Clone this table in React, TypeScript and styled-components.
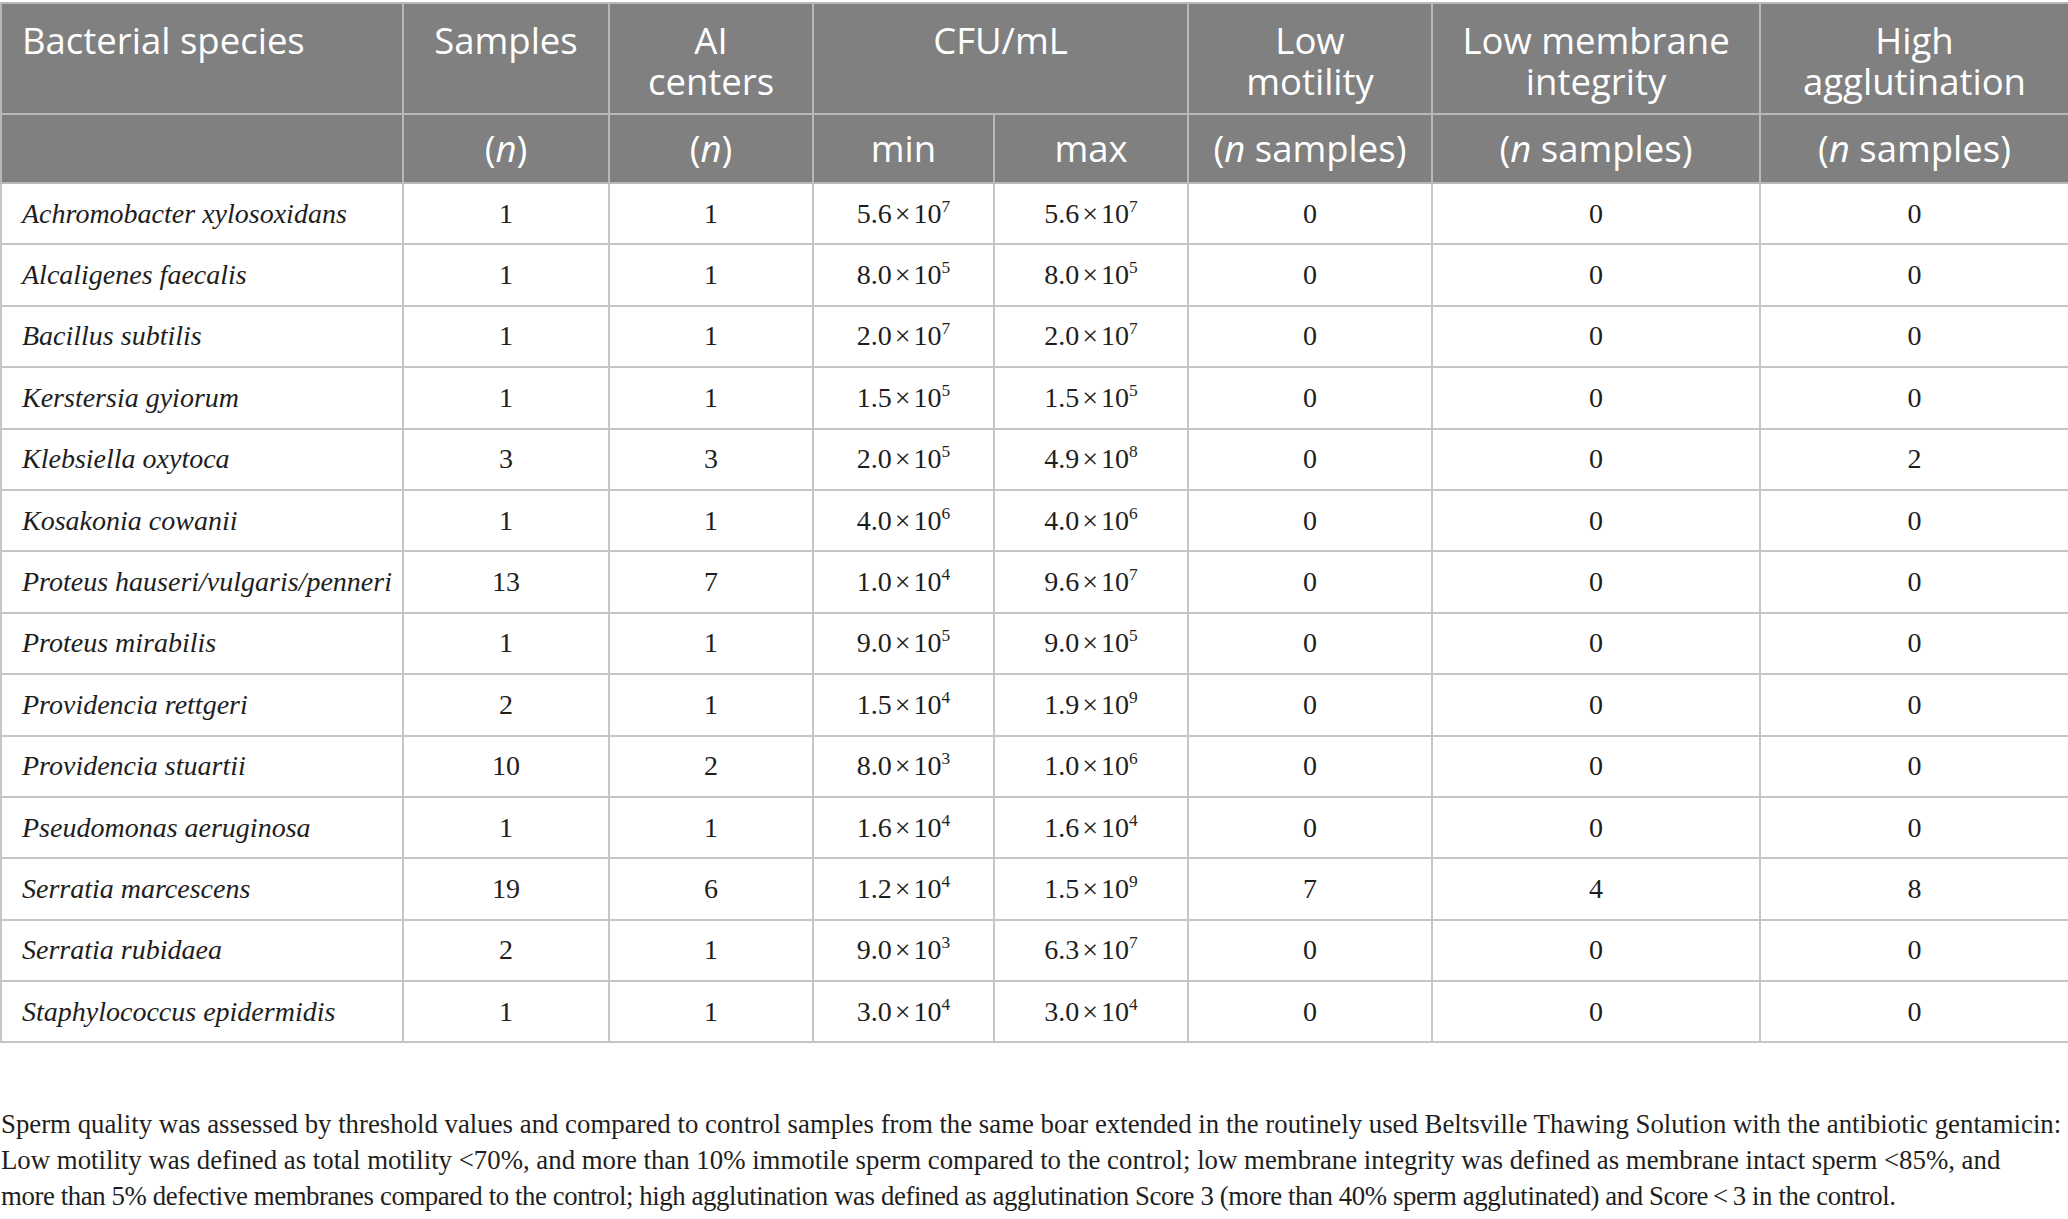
import React from "react";
import styled, { createGlobalStyle } from "styled-components";

const Global = createGlobalStyle`
  html, body { margin: 0; padding: 0; background: #ffffff; }
  body { font-family: "Liberation Serif", "Times New Roman", serif; color: #1e1e1e; }
`;

const Page = styled.div`
  width: 2068px;
  padding-top: 2px;
`;

const Table = styled.table`
  width: 2068px;
  table-layout: fixed;
  border-collapse: collapse;
`;

const HeadCell = styled.th<{ $align?: "left" | "center"; $top?: boolean }>`
  background: #7f807f;
  color: #ffffff;
  font-family: "Open Sans", "Noto Sans", sans-serif;
  font-weight: 400;
  font-size: 36.5px;
  line-height: 41px;
  text-align: ${(p) => p.$align ?? "center"};
  vertical-align: ${(p) => (p.$top ? "top" : "middle")};
  padding: ${(p) => (p.$top ? "16px 4px 0 4px" : "0 4px")};
  ${(p) => (p.$align === "left" ? "padding-left: 20px;" : "")}
  border: 2px solid #b8b8b8;
  height: ${(p) => (p.$top ? "111px" : "69px")};
  box-sizing: border-box;
  white-space: nowrap;
`;

const Em = styled.i`
  font-style: italic;
`;

const Row = styled.tr`
  height: 61.4px;
`;

const Species = styled.td`
  font-family: "Liberation Serif", "Times New Roman", serif;
  font-style: italic;
  font-size: 28px;
  text-align: left;
  padding: 0 0 0 20px;
  border: 2px solid #c6c6c6;
  vertical-align: middle;
  white-space: nowrap;
`;

const Num = styled.td`
  font-family: "Liberation Serif", "Times New Roman", serif;
  font-size: 28px;
  text-align: center;
  padding: 0;
  border: 2px solid #c6c6c6;
  vertical-align: middle;
  white-space: nowrap;
`;

const Times = styled.span`
  margin: 0 3px;
`;

const Sup = styled.sup`
  font-size: 0.62em;
  vertical-align: 0.62em;
  line-height: 0;
`;

const Footnote = styled.div`
  margin-top: 63px;
  font-family: "Liberation Serif", "Times New Roman", serif;
  font-size: 26.8px;
  line-height: 36px;
  color: #1e1e1e;
  padding-left: 1px;
`;

const Line = styled.span<{ $tracking?: number }>`
  display: block;
  white-space: nowrap;
  letter-spacing: ${(p) => p.$tracking ?? 0}px;
`;

type Sci = [string, number];
type R = [string, number, number, Sci, Sci, number, number, number];

const rows: R[] = [
  ["Achromobacter xylosoxidans", 1, 1, ["5.6", 7], ["5.6", 7], 0, 0, 0],
  ["Alcaligenes faecalis", 1, 1, ["8.0", 5], ["8.0", 5], 0, 0, 0],
  ["Bacillus subtilis", 1, 1, ["2.0", 7], ["2.0", 7], 0, 0, 0],
  ["Kerstersia gyiorum", 1, 1, ["1.5", 5], ["1.5", 5], 0, 0, 0],
  ["Klebsiella oxytoca", 3, 3, ["2.0", 5], ["4.9", 8], 0, 0, 2],
  ["Kosakonia cowanii", 1, 1, ["4.0", 6], ["4.0", 6], 0, 0, 0],
  ["Proteus hauseri/vulgaris/penneri", 13, 7, ["1.0", 4], ["9.6", 7], 0, 0, 0],
  ["Proteus mirabilis", 1, 1, ["9.0", 5], ["9.0", 5], 0, 0, 0],
  ["Providencia rettgeri", 2, 1, ["1.5", 4], ["1.9", 9], 0, 0, 0],
  ["Providencia stuartii", 10, 2, ["8.0", 3], ["1.0", 6], 0, 0, 0],
  ["Pseudomonas aeruginosa", 1, 1, ["1.6", 4], ["1.6", 4], 0, 0, 0],
  ["Serratia marcescens", 19, 6, ["1.2", 4], ["1.5", 9], 7, 4, 8],
  ["Serratia rubidaea", 2, 1, ["9.0", 3], ["6.3", 7], 0, 0, 0],
  ["Staphylococcus epidermidis", 1, 1, ["3.0", 4], ["3.0", 4], 0, 0, 0],
];

const SciNum = ({ v }: { v: Sci }) => (
  <>
    {v[0]}
    <Times>×</Times>10
    <Sup>{v[1]}</Sup>
  </>
);

const widths = [402, 206, 204, 181, 194, 244, 328, 309];

export default function App() {
  return (
    <Page>
      <Global />
      <Table>
        <colgroup>
          {widths.map((w, i) => (
            <col key={i} style={{ width: w }} />
          ))}
        </colgroup>
        <thead>
          <tr>
            <HeadCell $align="left" $top>Bacterial species</HeadCell>
            <HeadCell $top>Samples</HeadCell>
            <HeadCell $top>AI<br />centers</HeadCell>
            <HeadCell $top colSpan={2}>CFU/mL</HeadCell>
            <HeadCell $top>Low<br />motility</HeadCell>
            <HeadCell $top>Low membrane<br />integrity</HeadCell>
            <HeadCell $top>High<br />agglutination</HeadCell>
          </tr>
          <tr>
            <HeadCell $align="left"></HeadCell>
            <HeadCell>(<Em>n</Em>)</HeadCell>
            <HeadCell>(<Em>n</Em>)</HeadCell>
            <HeadCell>min</HeadCell>
            <HeadCell>max</HeadCell>
            <HeadCell>(<Em>n</Em> samples)</HeadCell>
            <HeadCell>(<Em>n</Em> samples)</HeadCell>
            <HeadCell>(<Em>n</Em> samples)</HeadCell>
          </tr>
        </thead>
        <tbody>
          {rows.map((r) => (
            <Row key={r[0]}>
              <Species>{r[0]}</Species>
              <Num>{r[1]}</Num>
              <Num>{r[2]}</Num>
              <Num><SciNum v={r[3]} /></Num>
              <Num><SciNum v={r[4]} /></Num>
              <Num>{r[5]}</Num>
              <Num>{r[6]}</Num>
              <Num>{r[7]}</Num>
            </Row>
          ))}
        </tbody>
      </Table>
      <Footnote>
        <Line>Sperm quality was assessed by threshold values and compared to control samples from the same boar extended in the routinely used Beltsville Thawing Solution with the antibiotic gentamicin:</Line>
        <Line>Low motility was defined as total motility &lt;70%, and more than 10% immotile sperm compared to the control; low membrane integrity was defined as membrane intact sperm &lt;85%, and</Line>
        <Line $tracking={-0.4}>more than 5% defective membranes compared to the control; high agglutination was defined as agglutination Score 3 (more than 40% sperm agglutinated) and Score{"\u2009<\u2009"}3 in the control.</Line>
      </Footnote>
    </Page>
  );
}
